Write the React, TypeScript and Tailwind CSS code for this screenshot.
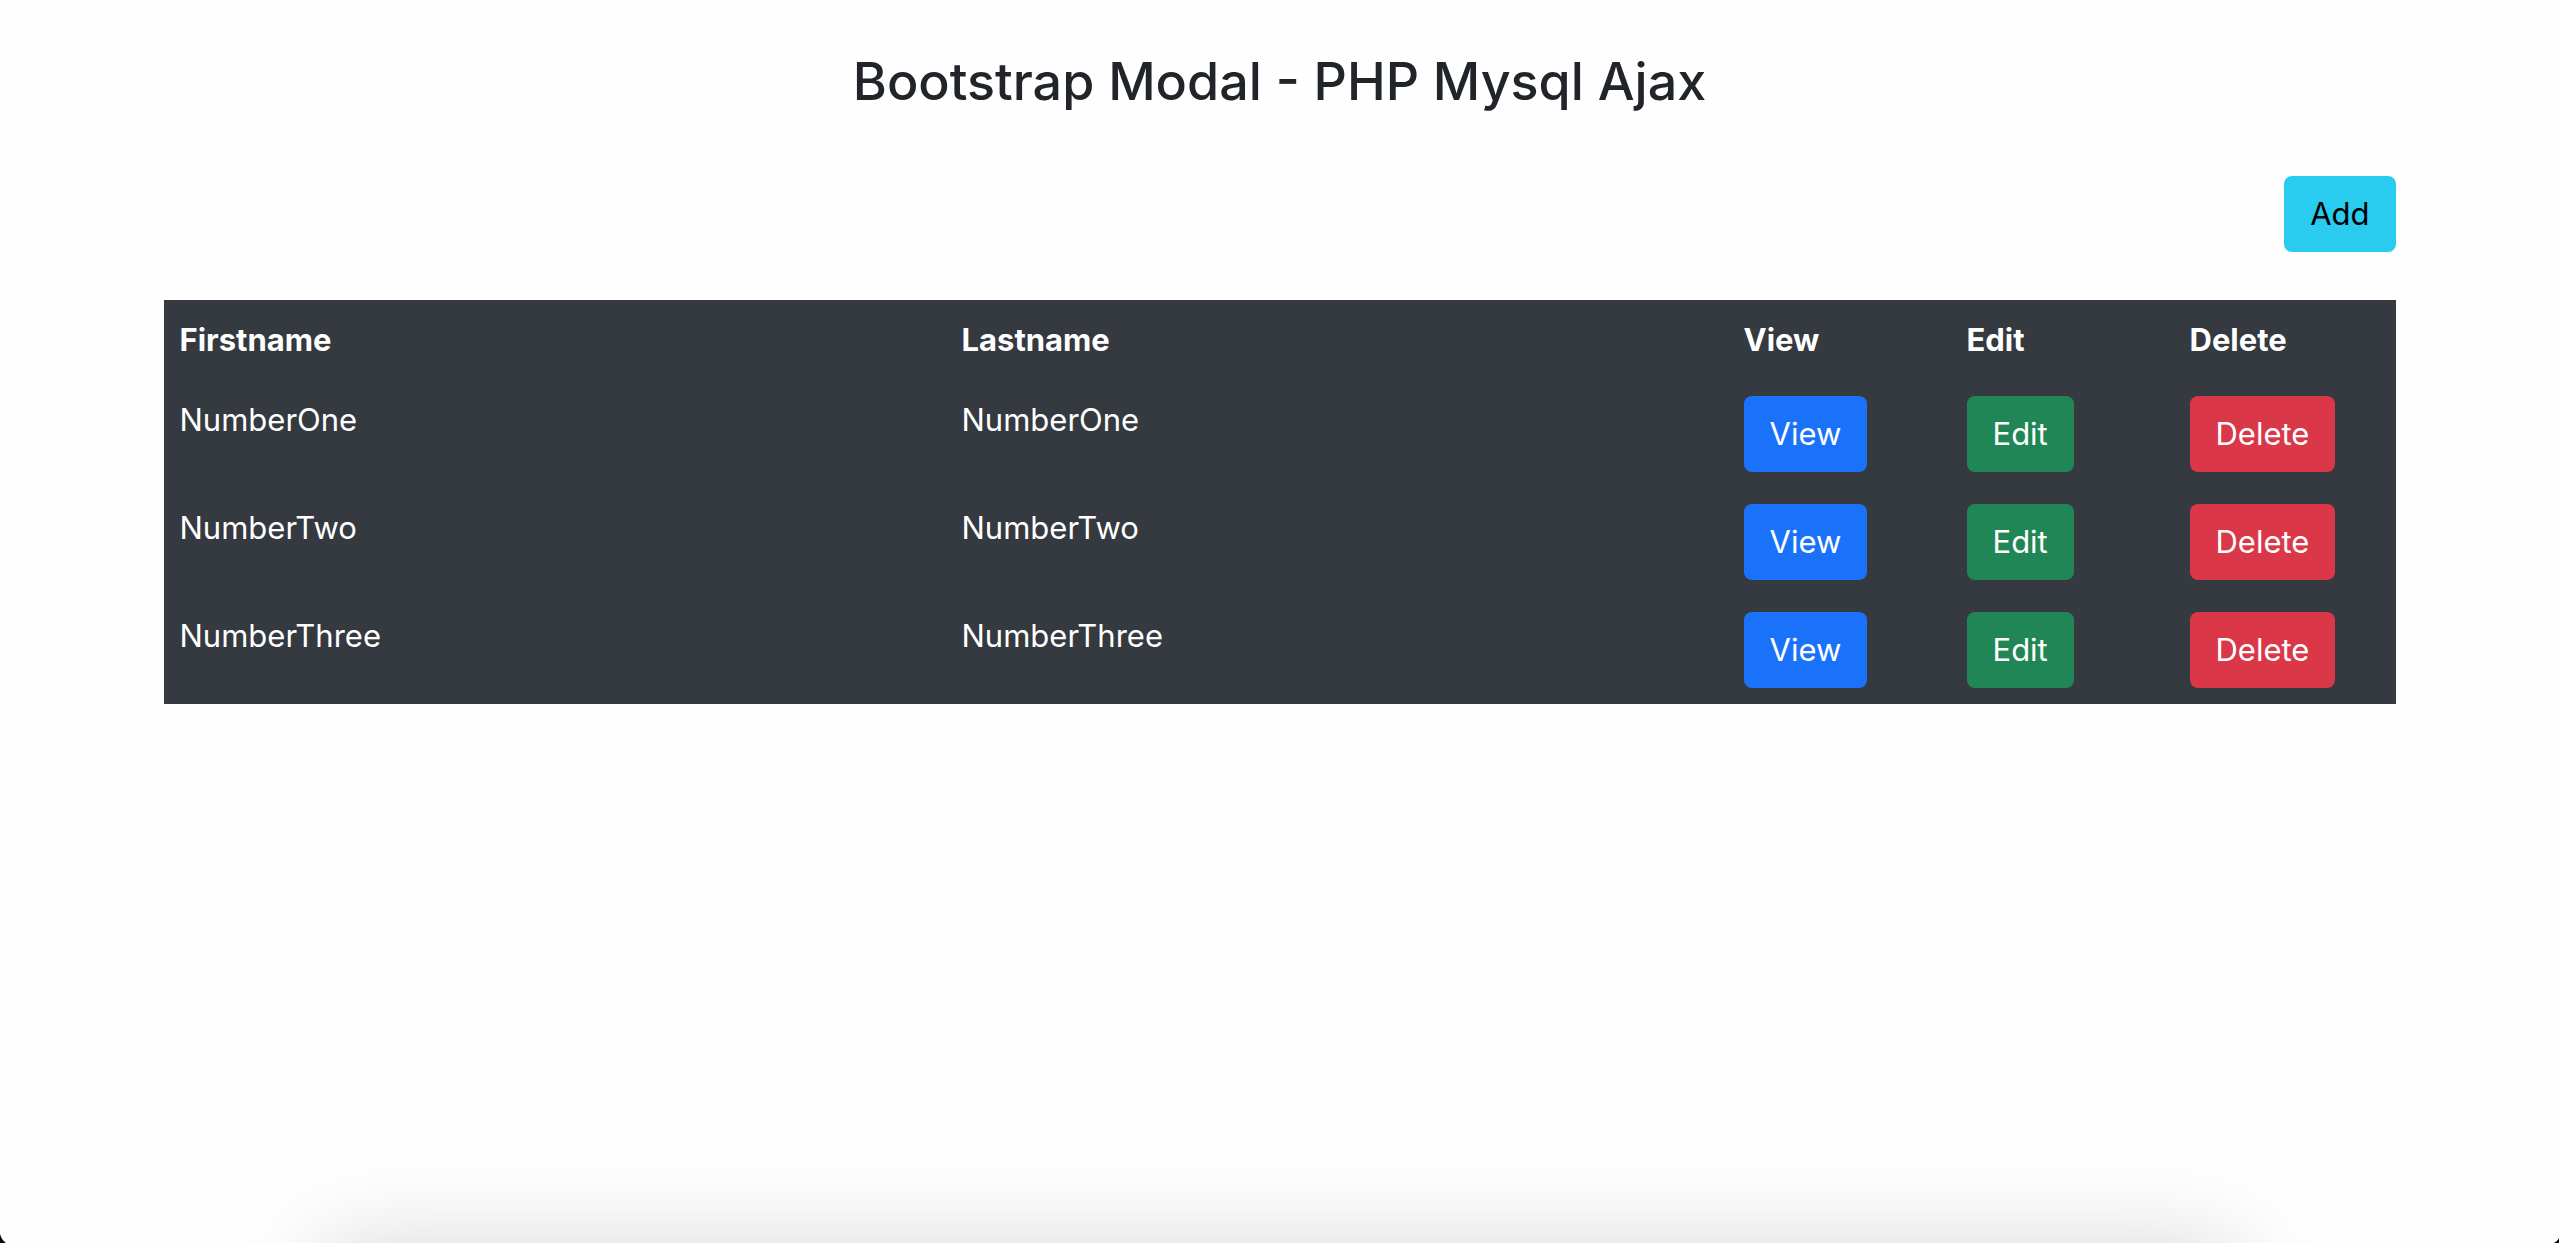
import React from "react";

type Person = { id: number; firstname: string; lastname: string };

const people: Person[] = [
  { id: 1, firstname: "NumberOne", lastname: "NumberOne" },
  { id: 2, firstname: "NumberTwo", lastname: "NumberTwo" },
  { id: 3, firstname: "NumberThree", lastname: "NumberThree" },
];

const variants = {
  info: "bg-[#29cbef] text-black",
  primary: "bg-[#1b72fa] text-white",
  success: "bg-[#218656] text-white",
  danger: "bg-[#da3748] text-white",
};

function Button({ variant, children }: { variant: keyof typeof variants; children: React.ReactNode }) {
  return (
    <button type="button" className={`block cursor-pointer rounded-lg px-[26px] py-[14px] ${variants[variant]}`}>
      {children}
    </button>
  );
}

function Th({ className = "", children }: { className?: string; children: React.ReactNode }) {
  return (
    <th scope="col" className={`p-4 text-left font-bold ${className}`}>
      {children}
    </th>
  );
}

export default function App() {
  return (
    <div className="relative flex min-h-screen flex-col overflow-hidden bg-[#fefefe] font-['Inter',sans-serif] text-[31px] leading-[48px] text-[#212529]">
      <main className="mx-auto w-full max-w-[2280px] px-6 pt-12">
        <h1 className="text-center text-[52px] leading-[68px] font-medium">Bootstrap Modal - PHP Mysql Ajax</h1>
        <div className="flex justify-end pt-[60px] pb-12">
          <Button variant="info">Add</Button>
        </div>
        <table className="w-full table-fixed bg-[#353940] text-white">
          <thead>
            <tr>
              <Th>Firstname</Th>
              <Th>Lastname</Th>
              <Th className="w-[223px]">View</Th>
              <Th className="w-[223px]">Edit</Th>
              <Th className="w-[222px]">Delete</Th>
            </tr>
          </thead>
          <tbody>
            {people.map((p) => (
              <tr key={p.id} className="align-top">
                <td className="p-4">{p.firstname}</td>
                <td className="p-4">{p.lastname}</td>
                <td className="p-4"><Button variant="primary">View</Button></td>
                <td className="p-4"><Button variant="success">Edit</Button></td>
                <td className="p-4"><Button variant="danger">Delete</Button></td>
              </tr>
            ))}
          </tbody>
        </table>
      </main>

      {/* Soft shadow rising from below the window, and the rounded window corners */}
      <div className="pointer-events-none absolute inset-x-0 bottom-0 h-28 overflow-hidden" aria-hidden="true">
        <div className="mx-[320px] mt-28 h-40 rounded-3xl shadow-[0_0_90px_rgba(0,0,0,0.15)]" />
      </div>
      <svg className="pointer-events-none absolute bottom-0 left-0" width="6" height="9" viewBox="0 0 6 9" aria-hidden="true">
        <path d="M0 0C1 4 3 7 6 9H0Z" fill="#05050c" />
      </svg>
      <svg className="pointer-events-none absolute right-0 bottom-0" width="5" height="5" viewBox="0 0 5 5" aria-hidden="true">
        <path d="M5 0C4 2 2 4 0 5H5Z" fill="#05050c" />
      </svg>
    </div>
  );
}
